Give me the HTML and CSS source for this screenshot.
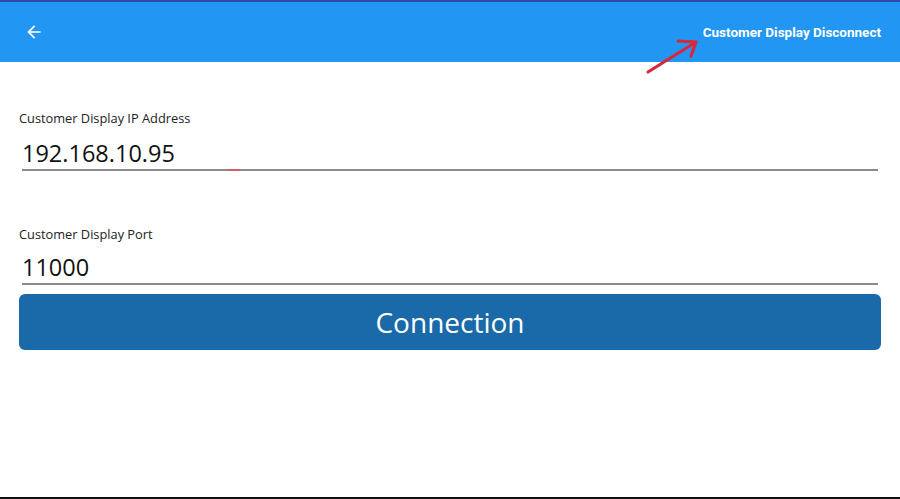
FILE: index.html
```html
<!DOCTYPE html>
<html lang="en">
<head>
    <meta charset="UTF-8">
    <title>Customer Display</title>
    <link rel="stylesheet" href="styles.css">
</head>
<body>

<div class="app">
    <!-- header -->
    <div class="bar">
        <span class="back">
            <svg width="20" height="20" viewBox="0 0 24 24"><path d="M20 11H7.83l5.59-5.59L12 4l-8 8 8 8 1.41-1.41L7.83 13H20v-2z" fill="#fff"/></svg>
        </span>
        <span class="title">Customer Display Disconnect</span>
    </div>

    <!-- form -->
    <div class="form">
        <div class="field">
            <div class="label">Customer Display IP Address</div>
            <div class="value">192.168.10.95<i class="caret"></i></div>
        </div>
        <div class="field port">
            <div class="label">Customer Display Port</div>
            <div class="value">11000</div>
        </div>
        <div class="btn">Connection</div>
    </div>

    <!-- hand drawn note -->
    <svg class="note" width="60" height="40" viewBox="0 0 60 40">
        <path d="M4 36 L52 6 M34 5 L52 6 L47 20" fill="none" stroke="#d8263a" stroke-width="3.2" stroke-linecap="round" stroke-linejoin="round"/>
    </svg>
</div>

</body>
</html>
```

FILE: styles.css
```css
* {
    box-sizing: border-box;
}
body {
    margin: 0;
    background-color: #fff;
    font-family: "Open Sans", "Noto Sans", sans-serif;
}

.app {
    position: relative;
    display: flex;
    flex-direction: column;
    height: 100vh;
    border-top: 2px solid #2c4aab;
    border-bottom: 2px solid #111;
}

.bar {
    display: flex;
    align-items: center;
    justify-content: space-between;
    height: 60px;
    padding: 0 19px 0 24px;
    background-color: #2196f3;
}
.back {
    display: flex;
}
.title {
    color: #fff;
    font-family: Roboto, "Liberation Sans", sans-serif;
    font-size: 13.5px;
    font-weight: 700;
}

.form {
    display: flex;
    flex-direction: column;
    padding: 47px 19px 0;
}
.field .label {
    height: 18px;
    color: #222;
    font-size: 12.8px;
    line-height: 18px;
}
.field .value {
    position: relative;
    margin: 11px 3px 0;
    height: 33px;
    border-bottom: 2px solid #8a8a8a;
    color: #111;
    font-size: 23.5px;
    line-height: 31px;
}
.port {
    margin-top: 54px;
}
.port .value {
    margin-top: 9px;
}
.caret {
    position: absolute;
    left: 206px;
    bottom: -2px;
    width: 12px;
    height: 2px;
    background-color: #e8505b;
    opacity: .7;
}

.btn {
    margin-top: 9px;
    height: 56px;
    border-radius: 6px;
    background-color: #1a69a8;
    color: #fff;
    font-size: 28px;
    line-height: 56px;
    text-align: center;
}

.note {
    position: absolute;
    left: 644px;
    top: 34px;
}
```
